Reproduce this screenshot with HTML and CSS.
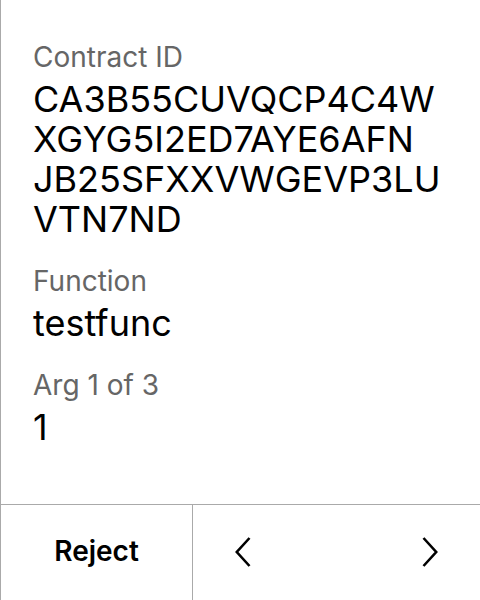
FILE: index.html
```html
<!DOCTYPE html>
<html>
<head>
<meta charset="utf-8">
<link rel="stylesheet" href="styles.css">
</head>
<body>
<div class="screen">
  <div class="content">
    <div class="field">
      <div class="label">Contract ID</div>
      <div class="value"><span class="line">CA3B55CUVQCP4C4W</span><span class="line">XGYG5I2ED7AYE6AFN</span><span class="line">JB25SFXXVWGEVP3LU</span><span class="line">VTN7ND</span></div>
    </div>
    <div class="field">
      <div class="label">Function</div>
      <div class="value">testfunc</div>
    </div>
    <div class="field">
      <div class="label">Arg 1 of 3</div>
      <div class="value">1</div>
    </div>
  </div>
  <div class="footer">
    <div class="reject">Reject</div>
    <div class="nav">
      <svg class="chev" width="16" height="32" viewBox="0 0 16 32"><path d="M14.5 2 L1.8 16 L14.5 30" fill="none" stroke="#000" stroke-width="2.6"/></svg>
      <svg class="chev" width="16" height="32" viewBox="0 0 16 32"><path d="M1.5 2 L14.2 16 L1.5 30" fill="none" stroke="#000" stroke-width="2.6"/></svg>
    </div>
  </div>
</div>
</body>
</html>
```
FILE: styles.css
```css
html, body {
  margin: 0;
  padding: 0;
  background: #fff;
}
.screen {
  width: 480px;
  height: 600px;
  box-sizing: border-box;
  border-left: 1px solid #aaa;
  display: flex;
  flex-direction: column;
  font-family: Inter, "Noto Sans", sans-serif;
  color: #000;
}
.content {
  flex: 1;
  padding: 41px 32px 0 32px;
  display: flex;
  flex-direction: column;
  gap: 26px;
}
.field {
  display: flex;
  flex-direction: column;
  gap: 6px;
}
.label {
  font-size: 28px;
  line-height: 32px;
  color: #666;
}
.value {
  font-size: 36px;
  line-height: 40px;
}
.line {
  display: block;
}
.footer {
  height: 95px;
  border-top: 1px solid #aaa;
  display: flex;
}
.reject {
  width: 191px;
  border-right: 1px solid #aaa;
  display: flex;
  align-items: center;
  justify-content: center;
  padding-bottom: 3px;
  box-sizing: border-box;
  width: 192px;
  font-size: 28px;
  font-weight: 600;
}
.nav {
  flex: 1;
  display: flex;
  align-items: center;
  justify-content: space-between;
  padding: 0 42px 2px;
}
.chev {
  display: block;
}
```
